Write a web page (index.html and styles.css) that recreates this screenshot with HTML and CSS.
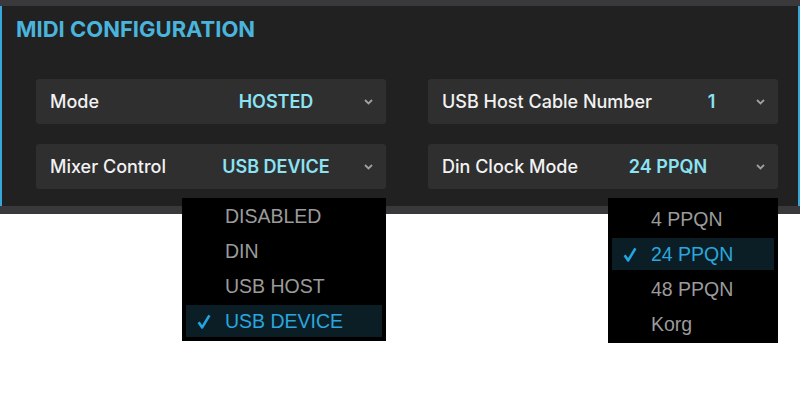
FILE: index.html
```html
<!DOCTYPE html>
<html>
<head>
<meta charset="utf-8">
<link rel="stylesheet" href="styles.css">
</head>
<body>
<div class="frame">
  <section class="panel">
    <h1 class="title">MIDI CONFIGURATION</h1>
    <div class="grid">
      <div class="row">
        <span class="label">Mode</span>
        <span class="value">HOSTED</span>
        <svg class="chev" width="9" height="6" viewBox="0 0 9 6"><path d="M1 1 L4.5 4.5 L8 1" fill="none" stroke="#a0a0a0" stroke-width="1.8"/></svg>
      </div>
      <div class="row">
        <span class="label">USB Host Cable Number</span>
        <span class="value narrow">1</span>
        <svg class="chev" width="9" height="6" viewBox="0 0 9 6"><path d="M1 1 L4.5 4.5 L8 1" fill="none" stroke="#a0a0a0" stroke-width="1.8"/></svg>
      </div>
      <div class="row">
        <span class="label">Mixer Control</span>
        <span class="value">USB DEVICE</span>
        <svg class="chev" width="9" height="6" viewBox="0 0 9 6"><path d="M1 1 L4.5 4.5 L8 1" fill="none" stroke="#a0a0a0" stroke-width="1.8"/></svg>
        <ul class="menu menu-left">
          <li class="item">DISABLED</li>
          <li class="item">DIN</li>
          <li class="item">USB HOST</li>
          <li class="item selected"><svg class="check" width="14" height="15" viewBox="0 0 14 15"><path d="M1.6 8.2 L5.2 13.4 L12.4 1.4" fill="none" stroke="#23a4e0" stroke-width="2.6" stroke-linejoin="round"/></svg>USB DEVICE</li>
        </ul>
      </div>
      <div class="row">
        <span class="label">Din Clock Mode</span>
        <span class="value">24 PPQN</span>
        <svg class="chev" width="9" height="6" viewBox="0 0 9 6"><path d="M1 1 L4.5 4.5 L8 1" fill="none" stroke="#a0a0a0" stroke-width="1.8"/></svg>
        <ul class="menu menu-right">
          <li class="item">4 PPQN</li>
          <li class="item selected"><svg class="check" width="14" height="15" viewBox="0 0 14 15"><path d="M1.6 8.2 L5.2 13.4 L12.4 1.4" fill="none" stroke="#23a4e0" stroke-width="2.6" stroke-linejoin="round"/></svg>24 PPQN</li>
          <li class="item">48 PPQN</li>
          <li class="item">Korg</li>
        </ul>
      </div>
    </div>
  </section>
</div>
</body>
</html>
```

FILE: styles.css
```css
* { box-sizing: border-box; }

html {
  height: 100%;
  background: #ffffff;
}

body {
  margin: 0;
  min-height: 400px;
  background: #ffffff;
  font-family: Inter, "Noto Sans", sans-serif;
}

.frame {
  background: #39393b;
  padding: 6px 0 8px;
}

.panel {
  height: 200px;
  background: #212121;
  border-left: 2px solid #38a8da;
  border-right: 2px solid #38a8da;
  padding: 9px 0 0 14px;
}

.title {
  margin: 0;
  font-size: 22px;
  line-height: 28px;
  font-weight: 700;
  color: #4ab4dc;
  letter-spacing: 0;
}

.grid {
  display: grid;
  grid-template-columns: 350px 350px;
  column-gap: 42px;
  row-gap: 20px;
  margin: 36px 0 0 20px;
}

.row {
  position: relative;
  height: 45px;
  background: #2f2f2f;
  border-radius: 3px;
  display: flex;
  align-items: center;
  padding-left: 14px;
}

.label {
  font-size: 18px;
  font-weight: 500;
  color: #f2f2f2;
  white-space: nowrap;
}

.value {
  margin-left: auto;
  width: 144px;
  text-align: center;
  font-size: 18px;
  font-weight: 600;
  color: #8be3f4;
  white-space: nowrap;
}

.value.narrow {
  width: 57px;
}

.chev {
  margin: 1px 13px 0 16px;
  flex: none;
}

.menu {
  position: absolute;
  top: calc(100% + 9px);
  right: 0;
  z-index: 2;
  margin: 0;
  list-style: none;
  background: #000000;
  padding: 2px 4px 4px;
  display: flex;
  flex-direction: column;
  gap: 3px;
  font-family: "Liberation Sans", Arial, sans-serif;
}

.menu-left {
  width: 204px;
}

.menu-right {
  width: 170px;
  padding-top: 5px;
  padding-bottom: 3px;
}

.item {
  height: 32px;
  flex: none;
  display: flex;
  align-items: center;
  padding-left: 39px;
  font-size: 19.5px;
  color: #9b9b9b;
  position: relative;
}

.item.selected {
  background: #0b1e26;
  color: #2aa6de;
}

.check {
  position: absolute;
  left: 11px;
  top: 9px;
}
```
